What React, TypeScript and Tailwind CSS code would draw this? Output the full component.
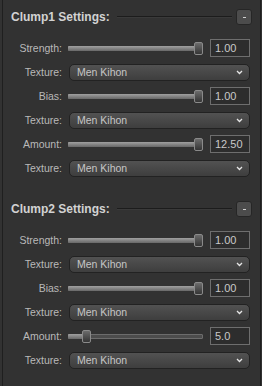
import React from "react";

const font = { fontFamily: '"Liberation Sans", Arial, sans-serif' };

function Label({ text }: { text: string }) {
  return (
    <div className="w-[59px] shrink-0 text-right text-[10.5px] text-[#b9b9b9] leading-none">
      {text}
    </div>
  );
}

function SliderRow({ label, pct, value }: { label: string; pct: number; value: string }) {
  const f = pct / 100;
  return (
    <div className="flex h-[24px] items-center">
      <Label text={label} />
      <div className="ml-[6px] flex h-[13px] w-[135px] items-center">
        <div className="relative h-[5px] w-full">
          <div className="absolute inset-0 rounded-[1px] border border-[#6c6c6c] bg-[#4c4c4c]" />
          <div
            className="absolute left-0 top-0 h-[5px] rounded-[1px] bg-gradient-to-b from-[#a0a0a0] to-[#686868]"
            style={{ width: `calc((100% - 9px) * ${f} + 4px)` }}
          />
          <div
            className="absolute top-[-4px] h-[13px] w-[9px] rounded-[2px] border border-[#8a8a8a] bg-gradient-to-b from-[#6c6c6c] to-[#353535]"
            style={{ left: `calc((100% - 9px) * ${f})` }}
          />
        </div>
      </div>
      <div className="ml-[7px] flex h-[18px] w-[40px] items-center border border-[#6e6e6e] bg-[#2d2d2d] pl-[4px] text-[11px] leading-none text-[#c9c9c9]">
        {value}
      </div>
    </div>
  );
}

function SelectRow() {
  return (
    <div className="flex h-[24px] items-center">
      <Label text="Texture:" />
      <div className="ml-[7px] flex h-[17px] w-[181px] items-center justify-between rounded-[5px] border border-[#222] bg-gradient-to-b from-[#525252] to-[#3e3e3e] pl-[7px] pr-[6px]">
        <span className="text-[10.5px] leading-none text-[#c6c6c6]">Men Kihon</span>
        <svg width="7" height="5" viewBox="0 0 7 5">
          <path d="M1 1 L3.5 3.5 L6 1" stroke="#e6e6e6" strokeWidth="1.3" fill="none" />
        </svg>
      </div>
    </div>
  );
}

function Section({ title, amountPct, amount }: { title: string; amountPct: number; amount: string }) {
  return (
    <div>
      <div className="flex h-[16px] items-center pl-[8px] pr-[8px]">
        <span className="text-[12px] font-bold leading-none text-[#d2d2d2]">{title}</span>
        <div className="ml-[7px] h-[2px] w-[115px] border-t border-[#1c1c1c] border-b border-b-[#3a3a3a]" />
        <div className="ml-auto flex h-[16px] w-[16px] items-center justify-center rounded-[3px] border border-[#262626] bg-[#4c4c4c]">
          <div className="h-[1px] w-[3px] bg-[#d0d0d0]" />
        </div>
      </div>
      <div className="mt-[11px]">
        <SliderRow label="Strength:" pct={100} value="1.00" />
        <SelectRow />
        <SliderRow label="Bias:" pct={100} value="1.00" />
        <SelectRow />
        <SliderRow label="Amount:" pct={amountPct} value={amount} />
        <SelectRow />
      </div>
    </div>
  );
}

export default function App() {
  return (
    <div className="flex h-[386px] w-[262px] bg-[#323232] pl-[2px] pr-[1px]" style={font}>
      <div className="flex-1 border-l border-r border-[#1f1f1f] pt-[9px]">
        <Section title="Clump1 Settings:" amountPct={100} amount="12.50" />
        <div className="mt-[21px]">
          <Section title="Clump2 Settings:" amountPct={11} amount="5.0" />
        </div>
      </div>
    </div>
  );
}
